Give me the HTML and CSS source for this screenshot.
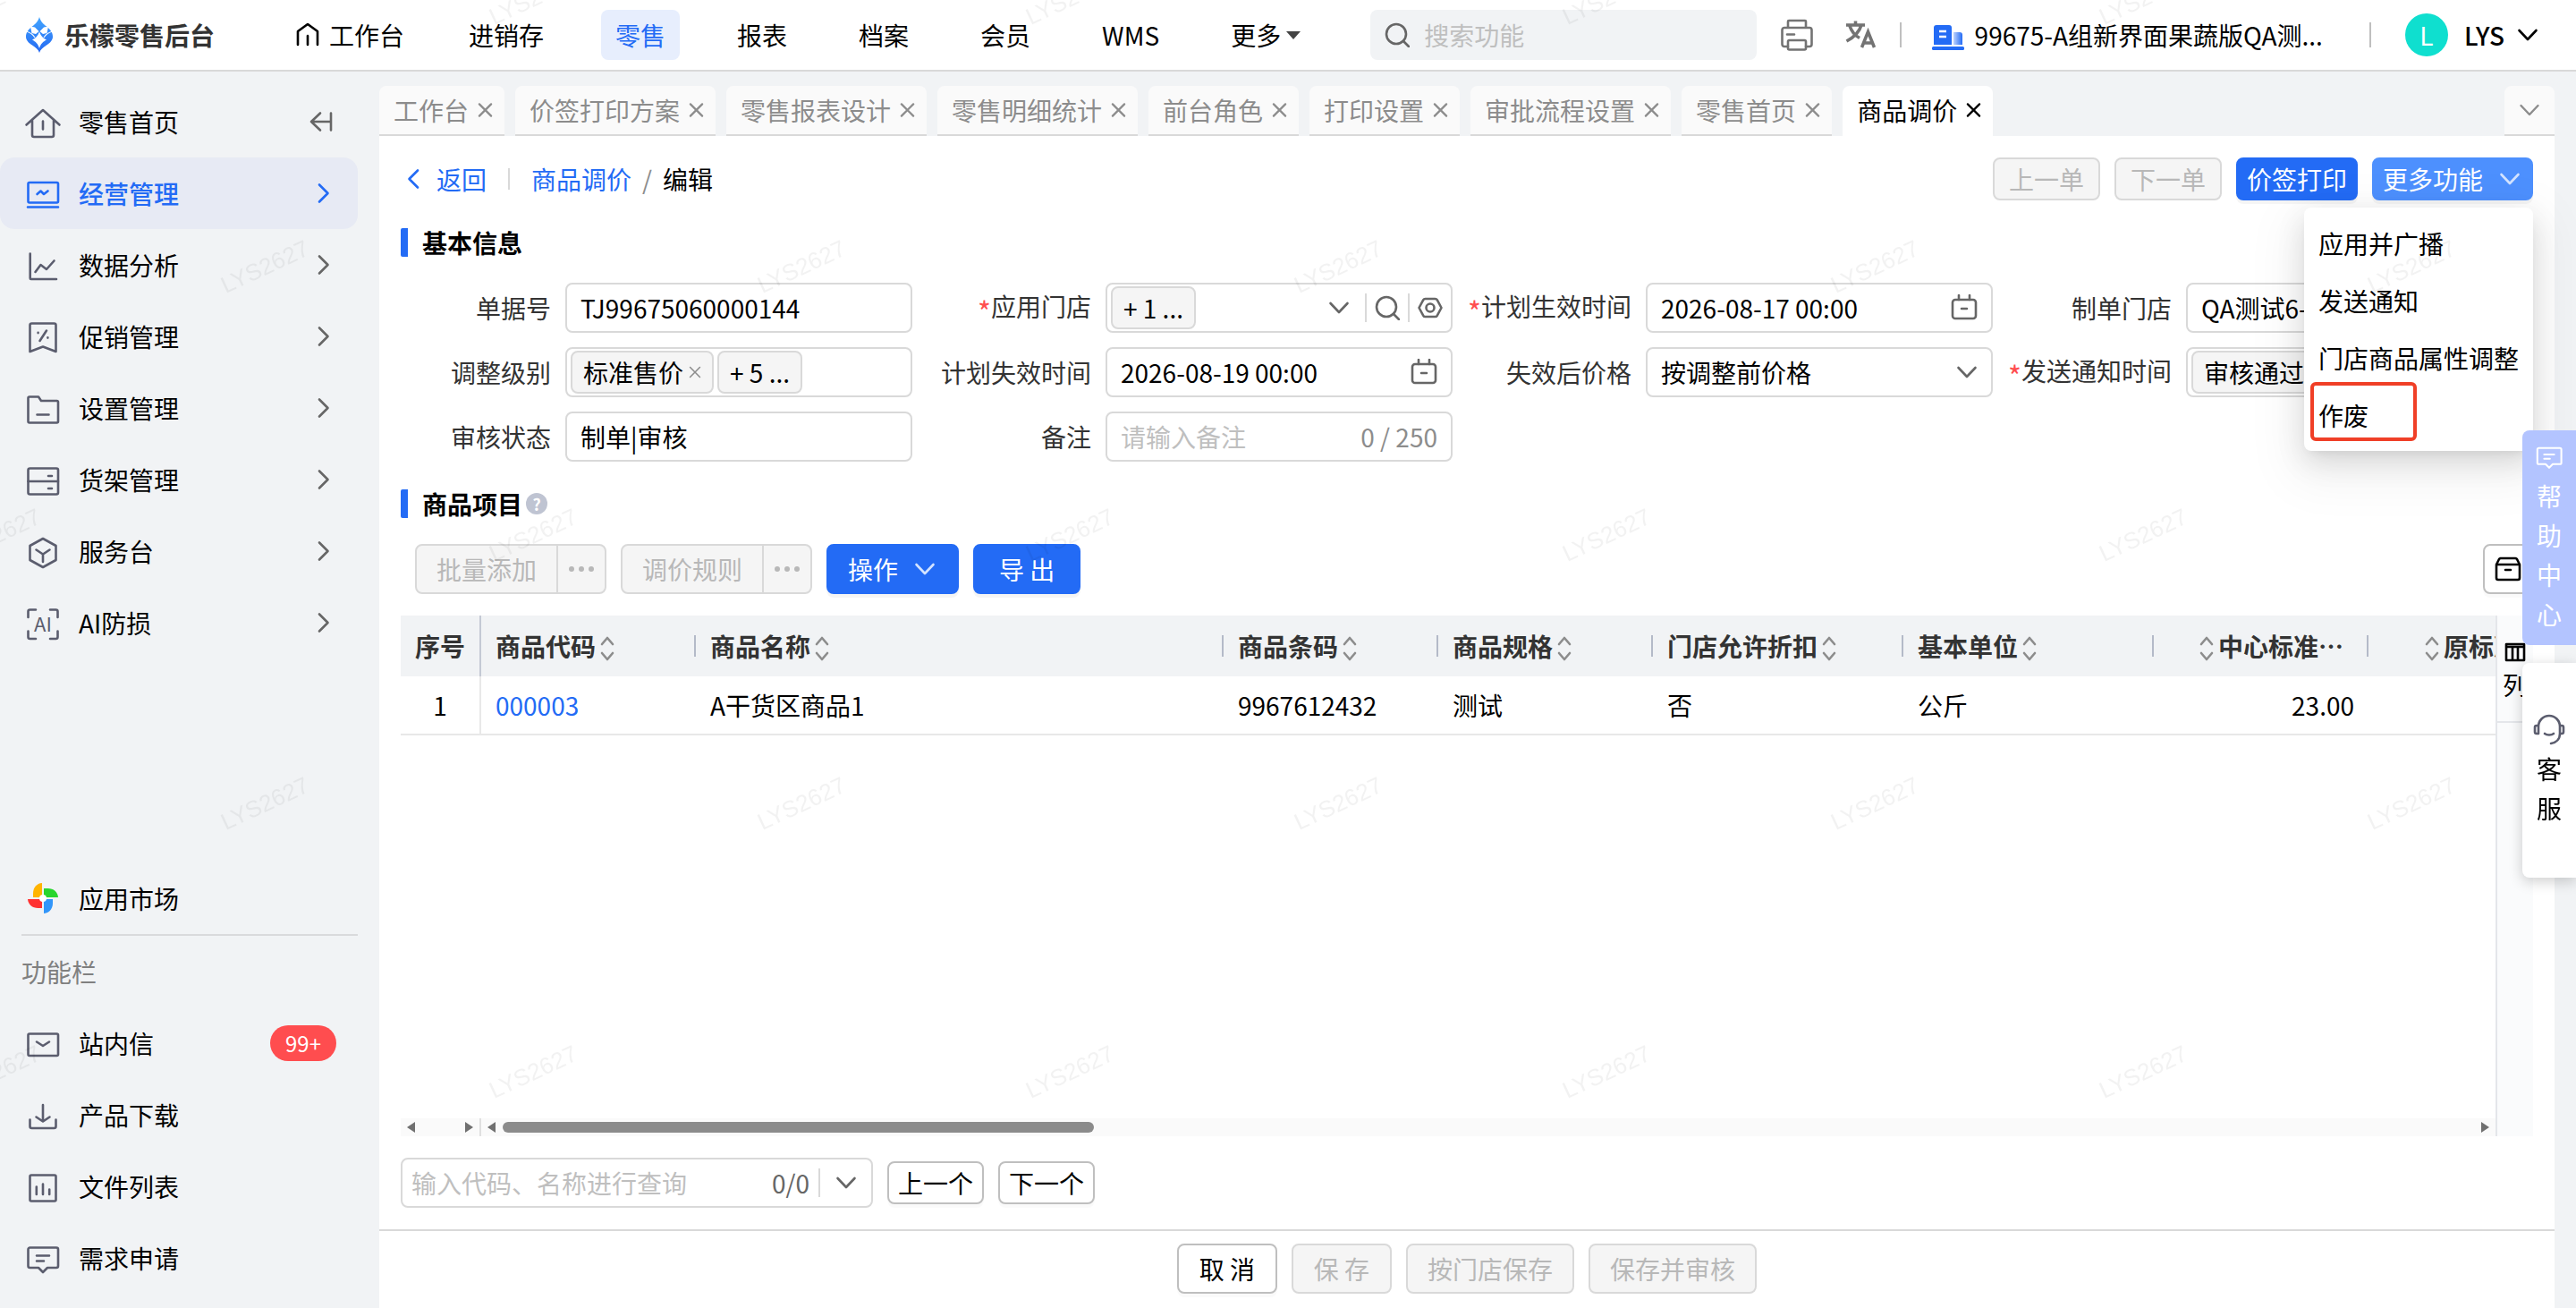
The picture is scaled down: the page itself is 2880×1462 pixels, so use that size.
FILE: index.html
```html
<!DOCTYPE html>
<html lang="zh-CN">
<head>
    <meta charset="UTF-8">
    <meta name="viewport" content="width=device-width, initial-scale=1.0">
    <title>商品调价 - 乐檬零售后台</title>
    <link rel="stylesheet" href="styles.css">
</head>
<body>
    <!-- Icon sprite -->
    <svg class="sprite" aria-hidden="true">
        <symbol id="i-down" viewBox="0 0 24 24"><path d="M2.500 7l9.500 10 9.500-10"/></symbol>
        <symbol id="i-right" viewBox="0 0 24 24"><path d="M5 2.500l9.500 9.500L5 21.500"/></symbol>
        <symbol id="i-left" viewBox="0 0 24 24"><path d="M19 2.500L9.500 12l9.500 9.500"/></symbol>
        <symbol id="i-close" viewBox="0 0 18 18"><path d="M2 2l14 14M16 2L2 16"/></symbol>
        <symbol id="i-search" viewBox="0 0 28 28"><circle cx="13" cy="13" r="11"/><path d="M21 21l6 6"/></symbol>
        <symbol id="i-calendar" viewBox="0 0 30 30"><rect x="2" y="6" width="26" height="21" rx="3"/><path d="M9 1v5M21 1v5M12 16h6"/></symbol>
        <symbol id="i-eye" viewBox="0 0 28 28"><path d="M8.500 4h11c1 0 1.800.5 2.200 1.200L26.500 14l-4.800 8.800c-.4.700-1.200 1.200-2.200 1.200h-11c-1 0-1.800-.5-2.200-1.200L1.500 14l4.800-8.800C6.700 4.500 7.500 4 8.500 4z"/><circle cx="14" cy="14" r="4.500"/></symbol>
        <symbol id="i-sort" viewBox="0 0 16 28"><path d="M2 9l6-7 6 7M2 19l6 7 6-7"/></symbol>
        <symbol id="i-chat" viewBox="0 0 40 40"><path d="M5.500 8.500h29.500a2 2 0 0 1 2 2V29a2 2 0 0 1-2 2H25l-5 5-5-5H5.500a2 2 0 0 1-2-2V10.500a2 2 0 0 1 2-2zM13 17.500h14M13 23.500h8"/></symbol>
    </svg>

    <!-- Header -->
    <header class="header">
        <a class="brand" href="#">
            <svg class="brand-icon" viewBox="0 0 40 40" aria-hidden="true">
                <defs><linearGradient id="g-logo" x1="0" y1="0" x2="0" y2="1"><stop offset="0" stop-color="#42a5ff"/><stop offset="1" stop-color="#2468f2"/></linearGradient></defs>
                <path fill="url(#g-logo)" d="M20 0c1.500 5 4 7.500 8 10.500 4.500 3.500 7 7 7 11.500 0 4-3 7-7 9.500-4 2.500-7 5-8 8.500-1-3.500-4-6-8-8.500-4-2.500-7-5.500-7-9.500 0-4.500 2.500-8 7-11.500C16 7.500 18.500 5 20 0z"/>
                <path fill="#fff" d="M20 16.500c1.500 4.500 4 7 8 9-4 2-6.500 4.500-8 9.500-1.500-5-4-7.500-8-9.500 4-2 6.500-4.500 8-9z"/>
                <path fill="#fff" d="M10 10.500l5 1 4.500 4.500-3.500 3-4.500-1zM30 10.500l-5 1-4.500 4.500 3.500 3 4.500-1z"/>
                <path fill="none" stroke="#fff" stroke-width="1.200" d="M5 16c4 1 8 3.500 10 7M35 16c-4 1-8 3.500-10 7"/>
            </svg>
            <span>乐檬零售后台</span>
        </a>
        <nav class="nav">
            <a class="nav-item nav-home" href="#">
                <svg class="icon nav-home-icon" viewBox="0 0 28 28" aria-hidden="true"><path d="M3 25V10L14 2l11 8v15M14 15v10"/></svg>工作台
            </a>
            <a class="nav-item" href="#">进销存</a>
            <a class="nav-item active" href="#">零售</a>
            <a class="nav-item" href="#">报表</a>
            <a class="nav-item" href="#">档案</a>
            <a class="nav-item" href="#">会员</a>
            <a class="nav-item" href="#">WMS</a>
            <a class="nav-item nav-more" href="#">更多<i class="caret"></i></a>
        </nav>
        <div class="header-search">
            <svg class="icon s28"><use href="#i-search"/></svg>
            <input type="text" placeholder="搜索功能" aria-label="搜索功能">
        </div>
        <button class="tool print" type="button" aria-label="打印">
            <svg class="icon s40" viewBox="0 0 40 40"><path d="M11 12V5a1 1 0 0 1 1-1h18a1 1 0 0 1 1 1v7M11 33H7a2.500 2.500 0 0 1-2.500-2.500v-16A2.500 2.500 0 0 1 7 12h28a2.500 2.500 0 0 1 2.500 2.500v16A2.500 2.500 0 0 1 35 33h-4M10 19.500h8"/><rect x="11" y="26" width="20" height="10.500" rx="1.500"/></svg>
        </button>
        <button class="tool" type="button" aria-label="切换语言">
            <svg class="icon s40 lang" viewBox="0 0 40 40"><path d="M4 9h21M14.500 4.500V9M21 9c-2 7-7 13-16.500 18M8 10c2 6 5.500 10.500 11 13.500M21.500 34l7-17.500 7 17.500M24 29h9"/></svg>
        </button>
        <i class="header-line"></i>
        <svg class="building" viewBox="0 0 40 40" aria-hidden="true">
            <defs><linearGradient id="g-build"><stop offset="0" stop-color="#bcd2fd"/><stop offset="1" stop-color="#236bf5"/></linearGradient></defs>
            <path fill="#236bf5" d="M4 31V12a3 3 0 0 1 3-3h14a3 3 0 0 1 3 3v19z"/>
            <path fill="url(#g-build)" d="M26 17h7a3 3 0 0 1 3 3v11H26z"/>
            <rect fill="#236bf5" x="2" y="33" width="36" height="4" rx="1.500"/>
            <path stroke="#fff" stroke-width="2.400" d="M10 16h8M10 22h8"/>
        </svg>
        <span class="company">99675-A组新界面果蔬版QA测...</span>
        <i class="header-line company-line"></i>
        <button class="user" type="button">
            <span class="avatar">L</span>
            <span class="user-name">LYS</span>
            <svg class="icon s24"><use href="#i-down"/></svg>
        </button>
    </header>

    <div class="layout">
        <!-- Sidebar -->
        <aside class="sidebar">
            <a class="side-item" href="#">
                <svg class="icon s40" viewBox="0 0 40 40"><path d="M1.500 23.500L20 7l18.500 16.500M8 18.500V35a2 2 0 0 0 2 2h20a2 2 0 0 0 2-2V18.500M20 19.500v9"/></svg>
                <span>零售首页</span>
                <svg class="icon s24 arrow" viewBox="0 0 24 24"><path d="M18 2.500v19M18 12H-4M6 2.500L-4 12l10 9.500"/></svg>
            </a>
            <a class="side-item active" href="#">
                <svg class="icon s40" viewBox="0 0 40 40"><rect x="3.500" y="8" width="33.500" height="22.500" rx="1.500"/><path d="M3 35.500h34M13.500 21l4-3.500 3.500 3.500 4.500-3.500"/></svg>
                <span>经营管理</span>
                <svg class="icon s24 arrow"><use href="#i-right"/></svg>
            </a>
            <a class="side-item" href="#">
                <svg class="icon s40" viewBox="0 0 40 40"><path d="M5.700 7.500V35a1 1 0 0 0 1 1H35M11.500 28L17.500 20l6.500 5 8.500-9.500"/></svg>
                <span>数据分析</span>
                <svg class="icon s24 arrow"><use href="#i-right"/></svg>
            </a>
            <a class="side-item" href="#">
                <svg class="icon s40" viewBox="0 0 40 40"><path d="M7.500 5.500h25a2 2 0 0 1 2 2V37L20 31.500 5.500 37V7.500a2 2 0 0 1 2-2zM24 13.500l-7.500 11.500M14.600 15.900v.2M25.400 21.400v.2"/></svg>
                <span>促销管理</span>
                <svg class="icon s24 arrow"><use href="#i-right"/></svg>
            </a>
            <a class="side-item" href="#">
                <svg class="icon s40" viewBox="0 0 40 40"><path d="M5 7.500h10L18 12h17.500a1.500 1.500 0 0 1 1.500 1.500V35a1.500 1.500 0 0 1-1.500 1.500H5A1.500 1.500 0 0 1 3.500 35V9A1.500 1.500 0 0 1 5 7.500zM13.500 27.500h13"/></svg>
                <span>设置管理</span>
                <svg class="icon s24 arrow"><use href="#i-right"/></svg>
            </a>
            <a class="side-item" href="#">
                <svg class="icon s40" viewBox="0 0 40 40"><rect x="3.500" y="7.500" width="33.500" height="29" rx="2"/><path d="M3.500 22H37M26 16h4M26 30h4"/></svg>
                <span>货架管理</span>
                <svg class="icon s24 arrow"><use href="#i-right"/></svg>
            </a>
            <a class="side-item" href="#">
                <svg class="icon s40" viewBox="0 0 40 40"><path d="M20 6l14.500 8v16L20 38 5.500 30V14zM12.500 18.500l7.500 5 7.500-5M20 23.500V32"/></svg>
                <span>服务台</span>
                <svg class="icon s24 arrow"><use href="#i-right"/></svg>
            </a>
            <a class="side-item" href="#">
                <svg class="icon s40" viewBox="0 0 40 40"><path d="M12 5.500H5.500a2 2 0 0 0-2 2V14M28 5.500h6.500a2 2 0 0 1 2 2V14M12 38H5.500a2 2 0 0 1-2-2v-6.500M28 38h6.500a2 2 0 0 0 2-2v-6.500"/><text class="ai-text" x="20" y="30">AI</text></svg>
                <span>AI防损</span>
                <svg class="icon s24 arrow"><use href="#i-right"/></svg>
            </a>

            <div class="side-bottom">
                <a class="side-item" href="#">
                    <svg class="s40" viewBox="0 0 40 40">
                        <path fill="#ffb400" d="M19 3v16H9v-4.500C9 8 13 3.500 19 3z"/>
                        <path fill="#28d52d" d="M21 9h4.500C32 9 36.500 13 37 19H21z"/>
                        <path fill="#3296fa" d="M21 21h10v4.500C31 32 27 36.500 21 37z"/>
                        <path fill="#ff3232" d="M19 21v10h-4.500C8 31 3.500 27 3 21z"/>
                        <circle fill="#fff" cx="20" cy="20" r="4"/>
                    </svg>
                    <span>应用市场</span>
                </a>
                <div class="side-title">功能栏</div>
                <a class="side-item" href="#">
                    <svg class="icon s40" viewBox="0 0 40 40"><rect x="3.500" y="9.500" width="33.500" height="24.500" rx="1.500"/><path d="M13 18.500l7 4.500 7-4.500"/></svg>
                    <span>站内信</span>
                    <b class="badge">99+</b>
                </a>
                <a class="side-item" href="#">
                    <svg class="icon s40" viewBox="0 0 40 40"><path d="M20 9v18M12.500 22.500L20 27.500l7.500-5M5.500 25.500V33a2 2 0 0 0 2 2h25a2 2 0 0 0 2-2v-7.500"/></svg>
                    <span>产品下载</span>
                </a>
                <a class="side-item" href="#">
                    <svg class="icon s40" viewBox="0 0 40 40"><rect x="5.500" y="7.500" width="29" height="29" rx="1.500"/><path d="M12.800 20.500V29M20 17.500V29M27.200 23.500V29"/></svg>
                    <span>文件列表</span>
                </a>
                <a class="side-item" href="#">
                    <svg class="icon s40"><use href="#i-chat"/></svg>
                    <span>需求申请</span>
                </a>
            </div>
        </aside>

        <main class="main">
            <!-- Page tabs -->
            <div class="tabs">
                <div class="tab"><a href="#">工作台</a><button type="button" aria-label="关闭"><svg class="icon s18"><use href="#i-close"/></svg></button></div>
                <div class="tab"><a href="#">价签打印方案</a><button type="button" aria-label="关闭"><svg class="icon s18"><use href="#i-close"/></svg></button></div>
                <div class="tab"><a href="#">零售报表设计</a><button type="button" aria-label="关闭"><svg class="icon s18"><use href="#i-close"/></svg></button></div>
                <div class="tab"><a href="#">零售明细统计</a><button type="button" aria-label="关闭"><svg class="icon s18"><use href="#i-close"/></svg></button></div>
                <div class="tab"><a href="#">前台角色</a><button type="button" aria-label="关闭"><svg class="icon s18"><use href="#i-close"/></svg></button></div>
                <div class="tab"><a href="#">打印设置</a><button type="button" aria-label="关闭"><svg class="icon s18"><use href="#i-close"/></svg></button></div>
                <div class="tab"><a href="#">审批流程设置</a><button type="button" aria-label="关闭"><svg class="icon s18"><use href="#i-close"/></svg></button></div>
                <div class="tab"><a href="#">零售首页</a><button type="button" aria-label="关闭"><svg class="icon s18"><use href="#i-close"/></svg></button></div>
                <div class="tab active"><a href="#">商品调价</a><button type="button" aria-label="关闭"><svg class="icon s18"><use href="#i-close"/></svg></button></div>
                <button class="tab tab-list" type="button" aria-label="全部标签"><svg class="icon s24"><use href="#i-down"/></svg></button>
            </div>

            <div class="page">
                <div class="page-bar">
                    <a class="back" href="#"><svg class="icon s24"><use href="#i-left"/></svg>返回</a>
                    <i class="bar-line"></i>
                    <a class="crumb" href="#">商品调价</a>
                    <span class="slash">/</span>
                    <span>编辑</span>
                    <div class="page-actions">
                        <button class="btn small" type="button" disabled>上一单</button>
                        <button class="btn small" type="button" disabled>下一单</button>
                        <button class="btn small primary tight" type="button">价签打印</button>
                        <div class="dropdown">
                            <button class="btn small primary hover tight" type="button" aria-expanded="true">更多功能<svg class="icon s24"><use href="#i-down"/></svg></button>
                            <div class="menu">
                                <button type="button">应用并广播</button>
                                <button type="button">发送通知</button>
                                <button type="button">门店商品属性调整</button>
                                <button type="button">作废</button>
                                <i class="mark"></i>
                            </div>
                        </div>
                    </div>
                </div>

                <!-- Basic info -->
                <h2 class="section-title">基本信息</h2>
                <form class="form">
                    <div class="form-item">
                        <label for="code">单据号</label>
                        <div class="field"><input id="code" type="text" value="TJ99675060000144"></div>
                    </div>
                    <div class="form-item">
                        <label class="required" for="store">应用门店</label>
                        <div class="field has-tag">
                            <span class="tag">+ 1 ...</span>
                            <input id="store" type="text">
                            <svg class="icon s24"><use href="#i-down"/></svg>
                            <button class="field-btn" type="button" aria-label="搜索门店"><svg class="icon s28"><use href="#i-search"/></svg></button>
                            <button class="field-btn" type="button" aria-label="查看门店"><svg class="icon s28"><use href="#i-eye"/></svg></button>
                        </div>
                    </div>
                    <div class="form-item">
                        <label class="required" for="start">计划生效时间</label>
                        <div class="field"><input id="start" type="text" value="2026-08-17 00:00"><svg class="icon s30"><use href="#i-calendar"/></svg></div>
                    </div>
                    <div class="form-item">
                        <label for="maker">制单门店</label>
                        <div class="field"><input id="maker" type="text" value="QA测试6-1"></div>
                    </div>
                    <div class="form-item">
                        <label for="level">调整级别</label>
                        <div class="field has-tag">
                            <span class="tag">标准售价<svg class="icon s18"><use href="#i-close"/></svg></span>
                            <span class="tag">+ 5 ...</span>
                            <input id="level" type="text">
                        </div>
                    </div>
                    <div class="form-item">
                        <label for="end">计划失效时间</label>
                        <div class="field"><input id="end" type="text" value="2026-08-19 00:00"><svg class="icon s30"><use href="#i-calendar"/></svg></div>
                    </div>
                    <div class="form-item">
                        <label for="after">失效后价格</label>
                        <div class="field"><select id="after"><option>按调整前价格</option></select><svg class="icon s24"><use href="#i-down"/></svg></div>
                    </div>
                    <div class="form-item">
                        <label class="required" for="notice">发送通知时间</label>
                        <div class="field has-tag">
                            <span class="tag">审核通过<svg class="icon s18"><use href="#i-close"/></svg></span>
                            <input id="notice" type="text">
                        </div>
                    </div>
                    <div class="form-item">
                        <label for="state">审核状态</label>
                        <div class="field"><input id="state" type="text" value="制单|审核"></div>
                    </div>
                    <div class="form-item">
                        <label for="remark">备注</label>
                        <div class="field"><input id="remark" type="text" placeholder="请输入备注"><span class="count">0 / 250</span></div>
                    </div>
                </form>

                <!-- Items -->
                <h2 class="section-title">商品项目<span class="help">?</span></h2>
                <div class="toolbar">
                    <div class="btn-group">
                        <button class="btn" type="button" disabled>批量添加</button>
                        <button class="btn more" type="button" aria-label="更多添加方式" disabled><i></i><i></i><i></i></button>
                    </div>
                    <div class="btn-group">
                        <button class="btn" type="button" disabled>调价规则</button>
                        <button class="btn more" type="button" aria-label="更多规则" disabled><i></i><i></i><i></i></button>
                    </div>
                    <button class="btn primary" type="button">操作<svg class="icon s24"><use href="#i-down"/></svg></button>
                    <button class="btn primary export" type="button">导 出</button>
                    <button class="btn archive" type="button" aria-label="归档">
                        <svg class="icon s30" viewBox="0 0 30 30"><path d="M2 10h26v15a2 2 0 0 1-2 2H4a2 2 0 0 1-2-2zM2 10l3-6a2 2 0 0 1 2-1h16a2 2 0 0 1 2 1l3 6M12 16h6"/></svg>
                    </button>
                </div>

                <div class="grid">
                    <div class="grid-main">
                        <div class="grid-view">
                            <table>
                                <colgroup>
                                    <col class="w-no"><col class="w-240"><col class="w-name"><col class="w-240"><col class="w-240">
                                    <col class="w-280"><col class="w-280"><col class="w-240"><col class="w-240">
                                </colgroup>
                                <thead>
                                    <tr>
                                        <th>序号</th>
                                        <th>商品代码<svg class="icon sort"><use href="#i-sort"/></svg></th>
                                        <th>商品名称<svg class="icon sort"><use href="#i-sort"/></svg></th>
                                        <th>商品条码<svg class="icon sort"><use href="#i-sort"/></svg></th>
                                        <th>商品规格<svg class="icon sort"><use href="#i-sort"/></svg></th>
                                        <th>门店允许折扣<svg class="icon sort"><use href="#i-sort"/></svg></th>
                                        <th>基本单位<svg class="icon sort"><use href="#i-sort"/></svg></th>
                                        <th class="num"><svg class="icon sort"><use href="#i-sort"/></svg>中心标准⋯</th>
                                        <th class="num"><svg class="icon sort"><use href="#i-sort"/></svg>原标准售价</th>
                                    </tr>
                                </thead>
                                <tbody>
                                    <tr>
                                        <td>1</td>
                                        <td><a href="#">000003</a></td>
                                        <td>A干货区商品1</td>
                                        <td>9967612432</td>
                                        <td>测试</td>
                                        <td>否</td>
                                        <td>公斤</td>
                                        <td class="num">23.00</td>
                                        <td class="num"></td>
                                    </tr>
                                </tbody>
                            </table>
                        </div>
                        <div class="scroll">
                            <div class="scroll-fixed"><i class="tri left"></i><i class="tri right"></i></div>
                            <div class="scroll-track"><i class="tri left"></i><div class="scroll-rail"><div class="thumb"></div></div><i class="tri right"></i></div>
                        </div>
                    </div>
                    <div class="grid-side">
                        <button class="col-btn" type="button">
                            <svg class="icon s24" viewBox="0 0 24 24"><path d="M2 3h20v18H2zM2 6h20M9 6v15M15 6v15"/></svg>
                            列
                        </button>
                    </div>
                </div>

                <div class="finder">
                    <div class="field find-field">
                        <input type="text" placeholder="输入代码、名称进行查询" aria-label="输入代码、名称进行查询">
                        <span class="hits">0/0</span>
                        <button class="find-more" type="button" aria-label="展开"><svg class="icon s24"><use href="#i-down"/></svg></button>
                    </div>
                    <button class="btn small tight" type="button">上一个</button>
                    <button class="btn small tight" type="button">下一个</button>
                </div>
            </div>

            <footer class="footer">
                <button class="btn" type="button">取 消</button>
                <button class="btn" type="button" disabled>保 存</button>
                <button class="btn" type="button" disabled>按门店保存</button>
                <button class="btn" type="button" disabled>保存并审核</button>
            </footer>
        </main>
    </div>

    <!-- Floating helpers -->
    <div class="float">
        <button class="float-help" type="button">
            <svg class="icon s32"><use href="#i-chat"/></svg>
            <span>帮</span><span>助</span><span>中</span><span>心</span>
        </button>
        <button class="float-service" type="button">
            <svg class="icon s36" viewBox="0 0 36 36"><path d="M6 15a12 12 0 0 1 24 0v8c0 6-4 10-10 11M6 14H4a2 2 0 0 0-2 2v5a2 2 0 0 0 2 2h2zM30 14h2a2 2 0 0 1 2 2v5a2 2 0 0 1-2 2h-2zM13 23c2.500 2 7.500 2 10 0"/></svg>
            <span>客</span><span>服</span>
        </button>
    </div>

    <svg class="watermark" aria-hidden="true">
        <defs>
            <pattern id="wm" x="-150" y="-150" width="600" height="600" patternUnits="userSpaceOnUse">
                <text x="446" y="457" transform="rotate(-25 446 448)">LYS2627</text>
                <text x="146" y="157" transform="rotate(-25 146 148)">LYS2627</text>
            </pattern>
        </defs>
        <rect width="100%" height="100%" fill="url(#wm)"/>
    </svg>
</body>
</html>
```
FILE: styles.css
```css
* { box-sizing: border-box; }
body {
    margin: 0;
    height: 100vh;
    display: flex;
    flex-direction: column;
    overflow: hidden;
    background: #f1f3f5;
    color: #000;
    font: 28px/40px "Noto Sans CJK SC", sans-serif;
}
a { color: inherit; text-decoration: none; }
i { font-style: normal; }
button, input, select { font: inherit; color: inherit; margin: 0; padding: 0; border: none; background: none; outline: none; }
button { cursor: pointer; white-space: nowrap; }
input { min-width: 0; width: 100%; flex: 1; }
input::placeholder { color: #bfbfbf; opacity: 1; }

/* icons */
.sprite { position: absolute; width: 0; height: 0; }
svg { flex-shrink: 0; overflow: visible; }
.icon { fill: none; stroke: currentColor; stroke-width: 2.6; stroke-linecap: round; stroke-linejoin: round; }
.s18 { width: 18px; height: 18px; }
.s24 { width: 24px; height: 24px; }
.s28 { width: 28px; height: 28px; }
.s30 { width: 30px; height: 30px; }
.s32 { width: 32px; height: 32px; }
.s36 { width: 36px; height: 36px; }
.s40 { width: 40px; height: 40px; }

/* header */
.header {
    display: flex;
    align-items: center;
    height: 80px;
    flex-shrink: 0;
    padding: 0 42px 0 24px;
    background: #fff;
    border-bottom: 2px solid #d9d9d9;
}
.brand { display: flex; align-items: center; gap: 8px; color: #333; font-weight: 700; white-space: nowrap; }
.brand-icon { width: 40px; height: 40px; }
.nav { display: flex; gap: 48px; margin-left: 74px; }
.nav-item { display: flex; align-items: center; height: 56px; padding: 0 16px; border-radius: 8px; white-space: nowrap; }
.nav-item.active { background: #e7eefd; color: #236bf5; }
.nav-home { gap: 10px; padding-right: 8px; }
.nav-home-icon { width: 28px; height: 28px; }
.nav-more { gap: 6px; }
.caret { border: 8px solid transparent; border-top: 9px solid #444; border-bottom: none; }
.header-search {
    display: flex;
    align-items: center;
    gap: 16px;
    flex: 1;
    height: 56px;
    margin-left: 62px;
    padding: 0 16px;
    border-radius: 8px;
    background: #f1f3f5;
    color: #666;
}
.tool { width: 40px; height: 40px; margin-left: 32px; color: #737373; }
.tool.print { margin-left: 24px; }
.tool .lang { stroke-width: 3.6; stroke-linecap: butt; stroke-linejoin: miter; }
.tool svg { display: block; }
.header-line { width: 2px; height: 28px; margin: 0 32px 0 24px; background: #bfbfbf; }
.building { width: 40px; height: 40px; }
.company { min-width: 388px; margin-left: 10px; white-space: nowrap; }
.company-line { margin: 0 38px 0 52px; }
.user { display: flex; align-items: center; font-weight: 500; }
.avatar { width: 48px; height: 48px; margin-right: 18px; border-radius: 50%; background: #0fdfcf; color: #fff; font-weight: 400; line-height: 48px; text-align: center; }
.user-name { margin-right: 14px; }

/* layout */
.layout { display: flex; flex: 1; min-height: 0; }
.sidebar { display: flex; flex-direction: column; width: 424px; flex-shrink: 0; padding: 16px 24px 16px 0; }
.side-item { display: flex; align-items: center; gap: 20px; height: 80px; padding: 0 24px 0 28px; border-radius: 16px; }
.side-item > .s40 { color: #5b5d6e; }
.side-item .arrow { margin-left: auto; color: #666; }
.side-item.active { background: #e7eaf4; color: #236bf5; font-weight: 500; }
.side-item.active > .icon { color: #236bf5; }
.ai-text { fill: currentColor; stroke: none; font-size: 22px; text-anchor: middle; }
.side-bottom { margin-top: auto; }
.side-title { height: 82px; margin-left: 24px; border-top: 2px solid #d9dadc; color: #808080; line-height: 80px; }
.badge { margin-left: auto; padding: 0 17px; border-radius: 20px; background: #ff4d4f; color: #fff; font-weight: 400; font-size: 24px; }

.main { display: flex; flex-direction: column; flex: 1; min-width: 0; margin-right: 24px; padding-top: 16px; }
.tabs { display: flex; gap: 12px; }
.tab {
    display: flex;
    align-items: center;
    gap: 10px;
    height: 56px;
    padding: 0 13px 0 16px;
    border-radius: 8px 8px 0 0;
    border-bottom: 2px solid #d9d9d9;
    background: #fafafa;
    color: #8c8c8c;
    white-space: nowrap;
}
.tab button { display: flex; }
.tab .icon { stroke-width: 2.4; width: 17px; }
.tab.active { background: #fff; border-color: #fff; color: #000; }
.tab-list { justify-content: center; width: 56px; margin-left: auto; padding: 0; }
.tab-list .icon { width: 24px; }

.page { display: flex; flex-direction: column; flex: 1; min-height: 0; padding: 24px; background: #fff; }
.page-bar { display: flex; align-items: center; height: 48px; }
.back { display: flex; align-items: center; gap: 16px; color: #236bf5; }
.bar-line { width: 2px; height: 24px; margin: 0 24px; background: #d9d9d9; }
.crumb { color: #236bf5; }
.slash { margin: 0 12px; color: #8c8c8c; }
.page-actions { display: flex; gap: 16px; margin-left: auto; }

/* buttons */
.btn {
    display: flex;
    align-items: center;
    justify-content: center;
    height: 56px;
    padding: 0 22px;
    border: 2px solid #bfbfbf;
    border-radius: 8px;
    background: #fff;
    box-shadow: 0 4px 0 rgba(0, 0, 0, .02);
}
.btn.small { height: 48px; padding: 0 16px; }
.btn.tight { padding: 0 10px; }
.btn.primary { border-color: #236bf5; background: #236bf5; color: #fff; box-shadow: 0 4px 0 rgba(0, 0, 0, .04); }
.btn.hover { border-color: #4d90fe; background: #4d90fe; }
.btn.primary .icon { margin: 0 2px 0 18px; stroke: #d3e3ff; }
.btn:disabled { border-color: #d9d9d9; background: #f5f5f5; color: #b8b8b8; box-shadow: none; cursor: default; }
.btn-group { display: flex; }
.btn-group .btn:first-child { border-radius: 8px 0 0 8px; }
.btn-group .more { gap: 5px; width: 56px; margin-left: -2px; padding: 0; border-radius: 0 8px 8px 0; }
.more i { width: 6px; height: 6px; border-radius: 3px; background: #b8b8b8; }

/* dropdown */
.dropdown { position: relative; }
.menu {
    position: absolute;
    z-index: 5;
    top: 56px;
    right: 0;
    padding: 8px 0;
    border-radius: 8px;
    background: #fff;
    box-shadow: 0 6px 12px -8px rgba(0, 0, 0, .12), 0 12px 32px rgba(0, 0, 0, .12), 0 18px 56px 16px rgba(0, 0, 0, .05);
}
.menu button { display: block; width: 256px; height: 64px; padding: 0 16px; text-align: left; }
.mark { position: absolute; left: 7px; bottom: 11px; width: 119px; height: 66px; border: 4px solid #f03f27; border-radius: 6px; pointer-events: none; }

/* form */
.section-title { display: flex; align-items: center; margin: 31px 0 29px; height: 32px; border-left: 8px solid #236bf5; border-radius: 2px; padding-left: 16px; font-size: 28px; font-weight: 700; }
.help { width: 24px; height: 24px; margin-left: 4px; border-radius: 50%; background: #bfc4d2; color: #fff; font-size: 18px; line-height: 24px; text-align: center; }
.form { display: grid; grid-template-columns: repeat(4, 1fr); gap: 16px; margin-left: -16px; }
.form-item { display: flex; align-items: center; gap: 16px; }
.form-item label { display: flex; justify-content: flex-end; width: 184px; flex-shrink: 0; color: #333; white-space: nowrap; }
.required::before { content: "*"; padding-top: 5px; color: #ff4d4f; font-size: 32px; }
.field { display: flex; align-items: center; flex: 1; min-width: 0; height: 56px; padding: 0 15px; border: 2px solid #d9d9d9; border-radius: 8px; background: #fff; }
.field > .icon, .field button { color: #666; }
.field.has-tag { gap: 4px; padding-left: 4px; }
.has-tag > .icon { margin-right: 7px; }
.field select { flex: 1; min-width: 0; appearance: none; }
.tag { display: flex; align-items: center; gap: 6px; height: 48px; padding: 0 12px; border: 2px solid #d9d9d9; border-radius: 8px; background: #f5f5f5; white-space: nowrap; }
.tag .icon { width: 14px; color: #8c8c8c; stroke-width: 2; }
.field-btn { display: flex; align-items: center; height: 32px; padding-left: 9px; border-left: 2px solid #d9d9d9; }
.has-tag .field-btn { margin-left: 6px; }
.has-tag .field-btn:last-child { margin: 0 -6px 0 5px; }
.count { color: #8c8c8c; }

/* grid */
.toolbar { display: flex; gap: 16px; padding-left: 16px; margin-bottom: 24px; }
.export { width: 120px; }
.archive { width: 56px; margin-left: auto; padding: 0; }
.grid { display: flex; flex: 1; min-height: 0; }
.grid-main { display: flex; flex-direction: column; flex: 1; min-width: 0; }
.grid-view { flex: 1; min-height: 0; overflow: hidden; }
.grid-side { width: 42px; border-left: 2px solid #e4e6ea; background: #fafbfc; }
table { width: 2440px; table-layout: fixed; border-collapse: separate; border-spacing: 0; }
.w-no { width: 90px; }
.w-240 { width: 240px; }
.w-280 { width: 280px; }
.w-name { width: 590px; }
th, td { padding: 0 16px; text-align: left; white-space: nowrap; }
th { height: 68px; background: linear-gradient(#b4bac8, #b4bac8) right center / 2px 24px no-repeat #f1f3f5; color: #333; font-weight: 700; }
td { height: 66px; border-bottom: 2px solid #e8e8e8; }
th:first-child, td:first-child { padding: 0; text-align: center; border-right: 2px solid #e8e8e8; }
th:first-child { background: #f1f3f5; border-right-color: #c4c9d4; }
th.num, td.num { text-align: right; }
th.num { padding-right: 28px; }
th.num:last-child { padding-right: 16px; }
td a { color: #236bf5; }
.sort { width: 16px; height: 28px; margin: 0 5px; vertical-align: -5px; color: #8c8c8c; }
.scroll { display: flex; height: 20px; background: #fafafa; }
.scroll-fixed, .scroll-track { display: flex; align-items: center; justify-content: space-between; padding: 0 7px; }
.scroll-fixed { width: 90px; border-right: 2px solid #e0e0e0; }
.scroll-track { flex: 1; gap: 8px; }
.scroll-rail { flex: 1; }
.thumb { width: 30%; height: 12px; border-radius: 6px; background: #8b8b8b; }
.tri { border: 6px solid transparent; }
.tri.left { border-right: 9px solid #707070; border-left: none; }
.tri.right { border-left: 9px solid #707070; border-right: none; }
.col-btn { display: flex; flex-direction: column; align-items: center; gap: 4px; width: 100%; height: 120px; padding-top: 29px; border-bottom: 2px solid #e4e6ea; }

.finder { display: flex; align-items: center; gap: 16px; margin-top: 24px; }
.find-field { flex: none; width: 528px; padding: 0 16px 0 10px; }
.hits { color: #666; }
.find-more { display: flex; align-items: center; height: 32px; margin-left: 10px; padding-left: 17px; border-left: 2px solid #d9d9d9; }
.footer { display: flex; justify-content: center; gap: 16px; padding: 14px 0 16px; border-top: 2px solid #d9d9d9; background: #fff; }
.footer .btn { min-width: 112px; }

/* floating helpers */
.float { position: fixed; z-index: 10; top: 481px; right: 0; width: 60px; }
.float button { display: flex; flex-direction: column; align-items: center; justify-content: center; width: 60px; height: 240px; border-radius: 8px 0 0 8px; line-height: 44px; }
.float-help { margin-bottom: 20px; background: #b3c4ff; color: #fff; }
.float-help .icon { margin-bottom: 6px; }
.float-service { background: #fff; box-shadow: 0 4px 16px rgba(0, 0, 0, .2); }
.float-service .icon { margin-bottom: 4px; color: #5b5d6e; }

.watermark { position: fixed; z-index: 20; inset: 0; width: 100%; height: 100%; pointer-events: none; }
.watermark text { fill: rgba(0, 0, 0, .05); font: 26px "Liberation Sans", sans-serif; text-anchor: middle; }
```
